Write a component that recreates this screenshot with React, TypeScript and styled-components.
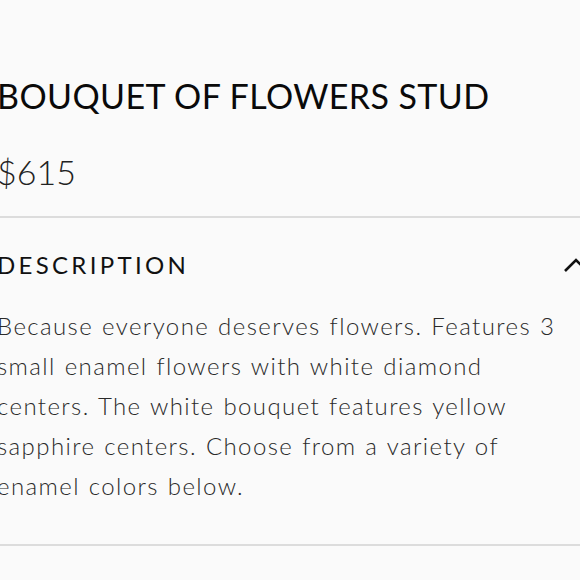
import styled, { createGlobalStyle } from "styled-components";

const GlobalStyle = createGlobalStyle`
  html, body {
    margin: 0;
    padding: 0;
    background: #fafafa;
    overflow: hidden;
  }
  body {
    font-family: "Lato", "Liberation Sans", sans-serif;
    color: #111;
  }
`;

const Page = styled.div`
  width: 594px;
  margin-left: -3px;
  padding-top: 72px;
`;

const Title = styled.h1`
  margin: 0;
  font-size: 34px;
  font-weight: 400;
  letter-spacing: 0.4px;
  line-height: 48px;
  color: #0a0a0a;
`;

const Price = styled.div`
  margin-top: 30px;
  font-size: 34px;
  font-weight: 300;
  line-height: 44px;
  color: #222;
`;

const Divider = styled.hr`
  margin: 22px 0 0;
  border: 0;
  height: 2px;
  background: #dcdcdc;
`;

const AccordionHeader = styled.button`
  display: flex;
  align-items: center;
  justify-content: space-between;
  width: 100%;
  padding: 0;
  margin-top: 32px;
  background: none;
  border: 0;
  font-family: inherit;
  cursor: pointer;
`;

const HeaderLabel = styled.span`
  font-size: 24px;
  font-weight: 400;
  letter-spacing: 3.3px;
  color: #111;
`;

const Body = styled.p`
  margin: 27px 0 0;
  font-size: 24px;
  font-weight: 300;
  line-height: 40px;
  letter-spacing: 1.4px;
  word-spacing: 1px;
  color: #2a2a2a;
  white-space: nowrap;
`;

const BottomDivider = styled(Divider)`
  margin-top: 38px;
`;

const Chevron = () => (
  <svg width="28" height="16" viewBox="0 0 28 16" fill="none">
    <path d="M2 14 L13 3 L24 14" stroke="#111" strokeWidth="2.6" />
  </svg>
);

export default function App() {
  return (
    <>
      <GlobalStyle />
      <Page>
        <Title>BOUQUET OF FLOWERS STUD</Title>
        <Price>$615</Price>
        <Divider />
        <AccordionHeader>
          <HeaderLabel>DESCRIPTION</HeaderLabel>
          <Chevron />
        </AccordionHeader>
        <Body>
          Because everyone deserves flowers. Features 3<br />
          small enamel flowers with white diamond<br />
          centers. The white bouquet features yellow<br />
          sapphire centers. Choose from a variety of<br />
          enamel colors below.
        </Body>
        <BottomDivider />
      </Page>
    </>
  );
}
